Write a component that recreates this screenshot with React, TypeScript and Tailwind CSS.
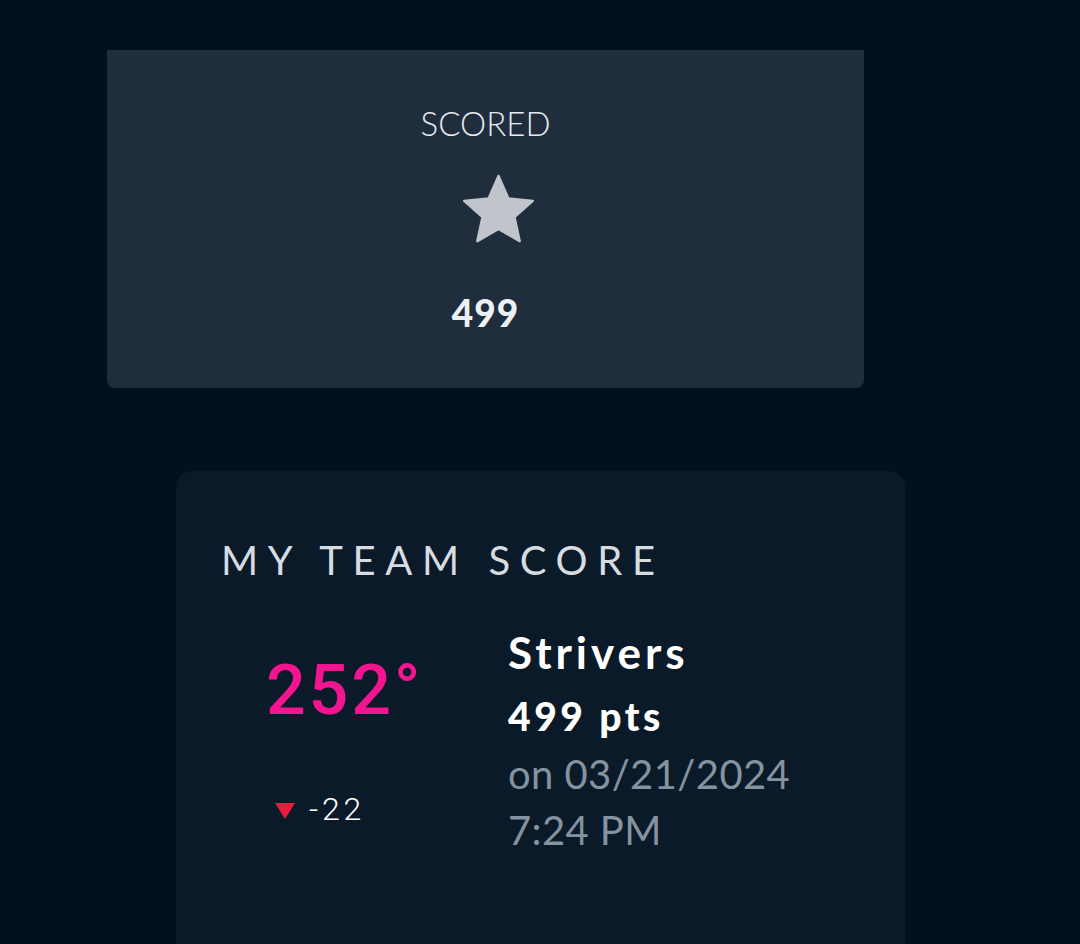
export default function App() {
  return (
    <div className="min-h-[944px] w-full overflow-hidden bg-[#00111f] font-['Lato',sans-serif]">
      <div className="h-[50px]" />
      <div className="ml-[107px] flex h-[338px] w-[757px] flex-col items-center rounded-b-lg bg-[#1f2d3d]">
        <div className="mt-[53px] text-[33px] font-light leading-[40px] text-[#e6ebf0]">SCORED</div>
        <svg width="73" height="69" viewBox="-36.5 -38 73 69" className="ml-[26px] mt-[31px]">
          <polygon
            points="0,-36 9.87,-13.59 34.24,-11.12 15.98,5.19 21.16,29.12 0,16.8 -21.16,29.12 -15.98,5.19 -34.24,-11.12 -9.87,-13.59"
            fill="#bfc5cb"
            stroke="#bfc5cb"
            strokeWidth="2.5"
            strokeLinejoin="round"
          />
        </svg>
        <div className="mt-[50px] text-[37px] font-black leading-[40px] tracking-[0.03em] text-[#eef1f4]">499</div>
      </div>

      <div className="ml-[176px] mt-[83px] h-[520px] w-[729px] rounded-2xl bg-[#0b1a29] pl-[45px] pt-[65px]">
        <div className="text-[40px] font-normal leading-[48px] tracking-[0.24em] text-[#d7dce1]">MY TEAM SCORE</div>
        <div className="mt-[42px] flex">
          <div className="flex w-[287px] flex-col pl-[45px]">
            <div className="mt-[24px] font-['Roboto',sans-serif] text-[70px] font-medium leading-[80px] tracking-[0.04em] text-[#f2158f]">252°</div>
            <div className="ml-[9px] mt-[59px] flex items-center gap-[14px]">
              <svg width="20" height="16" viewBox="0 0 20 16" className="mt-[4px]">
                <polygon points="0,0 20,0 10,16" fill="#ea1a3d" />
              </svg>
              <span className="font-['Roboto',sans-serif] text-[32px] font-light leading-[40px] tracking-[0.12em] text-white">-22</span>
            </div>
          </div>
          <div className="-mt-[3px] flex flex-col">
            <div className="text-[44px] font-bold leading-[58px] tracking-[0.09em] text-white">Strivers</div>
            <div className="mt-[6px] text-[39px] font-black leading-[58px] tracking-[0.09em] text-white">499 pts</div>
            <div className="text-[40px] font-normal leading-[58px] tracking-[0.01em] text-[#8593a1]">on 03/21/2024</div>
            <div className="-mt-[2px] text-[40px] font-normal leading-[58px] tracking-[0.01em] text-[#8593a1]">7:24 PM</div>
          </div>
        </div>
      </div>
    </div>
  )
}
